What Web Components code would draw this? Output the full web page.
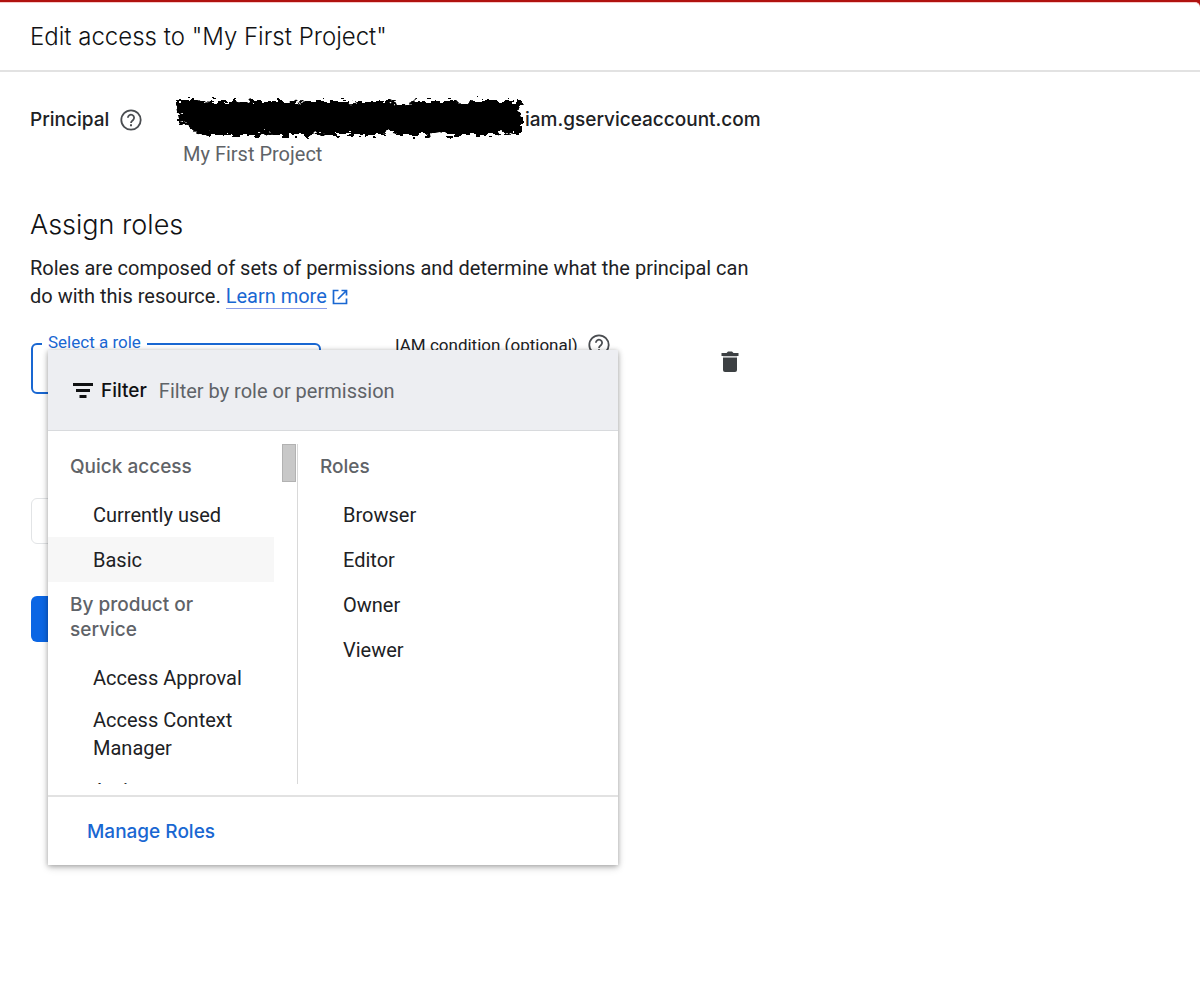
<!DOCTYPE html>
<html lang="en">
<head>
<meta charset="utf-8">
<meta name="viewport" content="width=device-width, initial-scale=1">
<title>Edit access</title>
<style>
  body {
    margin: 0;
    color: #202124;
    background: #fff;
    font: 400 20px/28px Roboto, "Liberation Sans", sans-serif;
    --display: Inter, "Open Sans", sans-serif;
    --blue: #1967d2;
    --muted: #5f6368;
    --line: #e2e2e2;
  }
</style>
</head>
<body>
<access-page></access-page>

<script>
const define = (name, html) => {
  const template = document.createElement('template');
  template.innerHTML = html;
  customElements.define(name, class extends HTMLElement {
    constructor() {
      super();
      this.attachShadow({ mode: 'open' }).append(template.content.cloneNode(true));
    }
  });
};

define('help-icon', `
<style>
  :host { display: inline-flex; width: 24px; height: 24px; color: #4a4d51; }
  button { display: flex; padding: 0; border: 0; background: none; color: inherit; }
</style>
<button type="button" aria-label="Help">
  <svg width="24" height="24" viewBox="0 0 24 24" fill="none" stroke="currentColor" stroke-width="1.8" aria-hidden="true">
    <circle cx="12" cy="12" r="9.700"/>
    <path d="M8.900 9.800a3.100 3.100 0 1 1 5 2.400c-1.200.9-1.900 1.400-1.900 2.900"/>
    <path d="M12 16.200v2" stroke-width="2"/>
  </svg>
</button>`);

define('page-header', `
<style>
  :host { display: block; padding: 17px 30px 16px; border-bottom: 2px solid var(--line); }
  h1 { margin: 0; font: 300 24px/34px var(--display); color: #111214; }
</style>
<h1><slot></slot></h1>`);

define('redacted-text', `
<style>
  :host { display: block; width: 348px; height: 44px; }
  svg { display: block; overflow: visible; }
</style>
<svg width="348" height="44" viewBox="0 2 348 44" aria-hidden="true">
  <filter id="rough" x="-5%" y="-20%" width="110%" height="140%">
    <feTurbulence type="fractalNoise" baseFrequency="0.14 0.3" numOctaves="2" seed="7"/>
    <feDisplacementMap in="SourceGraphic" scale="13" xChannelSelector="R" yChannelSelector="G"/>
  </filter>
  <path filter="url(#rough)" d="M1 4H22L24 7 34 5H62L66 8 78 5H110L116 8 130 5H174L178 8 184 5H214L222 9 240 5H280L286 9 296 5H346L343 18 346 24V39H334L326 36 318 39H270L262 37 252 39H222L214 34 208 39H150L142 37 130 39H98L90 37 80 39H34L22 38 12 29 5 27 2 17Z"/>
</svg>`);

define('principal-row', `
<style>
  :host { display: grid; grid-template-columns: 146px 1fr; align-items: start; }
  .label, .account { display: flex; align-items: center; height: 44px; font: 500 19px/28px var(--display); }
  .label { gap: 10px; }
  .account { gap: 1px; }
  .project { padding-left: 7px; line-height: 24px; color: var(--muted); }
</style>
<div class="label"><span>Principal</span><help-icon></help-icon></div>
<div>
  <div class="account"><redacted-text></redacted-text><slot></slot></div>
  <div class="project"><slot name="project"></slot></div>
</div>`);

define('roles-intro', `
<style>
  :host { display: block; max-width: 730px; }
  h2 { margin: 0 0 12px; font: 300 27px/34px var(--display); color: #111214; }
  p { margin: 0; }
  a { color: var(--blue); text-decoration: none; border-bottom: 1px solid #8c9eea; }
  svg { margin-left: 4px; vertical-align: -3px; color: var(--blue); }
</style>
<h2>Assign roles</h2>
<p>Roles are composed of sets of permissions and determine what the principal can <wbr>do with this resource. <a href="#learn">Learn more</a><svg width="18" height="18" viewBox="0 0 18 18" fill="none" stroke="currentColor" stroke-width="1.7" aria-hidden="true"><path d="M7.500 2.500H2.500v13h13v-5M10.500 2.500h5v5M15.500 2.500 7 11"/></svg></p>`);

define('role-item', `
<style>
  :host { display: block; }
  button {
    display: flex; align-items: center; box-sizing: border-box; width: 100%; min-height: 45px;
    padding: 6px 20px 6px 45px; border: 0; background: none;
    color: #202124; font: inherit; text-align: left;
  }
  :host([selected]) button { background: #f7f7f7; }
</style>
<button type="button"><slot></slot></button>`);

define('role-heading', `
<style>
  :host { display: block; padding: 10px 22px 13px; color: var(--muted); font: 500 19px/25px var(--display); }
</style>
<slot></slot>`);

define('role-menu', `
<style>
  :host { display: block; background: #fff; box-shadow: 0 1px 5px rgba(0,0,0,.3), 0 3px 8px rgba(0,0,0,.14); }
  .filter {
    display: flex; align-items: center; box-sizing: border-box; height: 81px; padding: 2px 24px 0;
    background: #edeef2; border-bottom: 1px solid #d8dadd;
  }
  label { display: flex; align-items: center; gap: 7px; color: #101113; font: 500 19px/28px var(--display); }
  input {
    flex: 1; min-width: 0; margin: 0; padding: 0 0 0 12px; border: 0; outline: 0; background: none;
    color: inherit; font: inherit;
  }
  input::placeholder { color: var(--muted); opacity: 1; }
  .panes { display: grid; grid-template-columns: 250px 1fr; height: 340px; padding: 13px 0 11px; }
  .pane { overflow: hidden; }
  .groups { display: grid; grid-template-columns: 1fr 14px; column-gap: 8px; box-sizing: border-box; padding-right: 1px; border-right: 1px solid #d9d9d9; }
  .thumb { box-sizing: border-box; height: 38px; background: #c8c8c8; border: 1px solid #b2b2b2; }
  .foot { padding: 21px 39px 19px; border-top: 2px solid var(--line); }
  a { display: block; color: var(--blue); text-decoration: none; font: 500 19px/28px var(--display); }
</style>
<div class="filter">
  <label for="q">
    <svg width="22" height="20" viewBox="0 0 22 20" fill="currentColor" aria-hidden="true"><path d="M1 2h20v3H1zM4 8h14v3H4zM7.500 14h7v3h-7z"/></svg>
    Filter
  </label>
  <input id="q" type="text" placeholder="Filter by role or permission">
</div>
<div class="panes">
  <div class="pane groups">
    <div><slot name="groups"></slot></div>
    <div class="thumb"></div>
  </div>
  <div class="pane"><slot name="roles"></slot></div>
</div>
<div class="foot"><a href="#roles">Manage Roles</a></div>`);

define('role-select', `
<style>
  :host { display: block; font-size: 17px; }
  fieldset {
    box-sizing: border-box; height: 62px; margin: 0; padding: 0 0 0 9px; min-width: 0;
    border: 2px solid var(--blue); border-radius: 6px;
  }
  legend { padding: 0 6px 4px; color: var(--blue); line-height: 20px; }
  select { width: 100%; height: 30px; border: 0; outline: 0; background: none; appearance: none; font: inherit; }
</style>
<fieldset>
  <legend><label for="role">Select a role</label></legend>
  <select id="role"></select>
</fieldset>`);

define('role-row', `
<style>
  :host { display: grid; grid-template-columns: 290px 249px auto; column-gap: 74px; align-items: start; justify-content: start; position: relative; }
  .condition { display: flex; align-items: center; gap: 9px; height: 26px; font-size: 17px; }
  .delete { display: flex; margin-top: 18px; padding: 0; border: 0; background: none; color: #3c4043; }
  ::slotted(role-menu) { position: absolute; left: 17px; top: 18px; width: 570px; z-index: 1; }
</style>
<role-select></role-select>
<div class="condition"><span>IAM condition (optional)</span><help-icon></help-icon></div>
<button class="delete" type="button" aria-label="Delete role">
  <svg width="24" height="24" viewBox="0 0 24 24" fill="currentColor" aria-hidden="true"><path d="M5 7h14v13a2 2 0 0 1-2 2H7a2 2 0 0 1-2-2z"/><path d="M5 6.500h14v1.500H5z" fill="#a0a3a5"/><path d="M3.500 3h5l1.500-1.500h4L15.500 3h5v3h-17z"/></svg>
</button>
<slot></slot>`);

define('form-actions', `
<style>
  :host { display: flex; flex-direction: column; align-items: flex-start; gap: 52px; }
  button { box-sizing: border-box; height: 46px; border-radius: 6px; }
  .add { width: 190px; border: 1px solid #e2e4e6; background: #fff; }
  .save { width: 84px; border: 0; background: #0b66e4; }
</style>
<button class="add" type="button" aria-label="Add another role"></button>
<button class="save" type="submit" aria-label="Save"></button>`);

define('access-page', `
<style>
  :host { display: block; background: #b0120f; padding-top: 2px; }
  .sheet { background: #fff; border-top: 1px solid #f6c9c9; border-top-right-radius: 5px; min-height: calc(100vh - 3px); }
  main { padding: 26px 30px; }
  roles-intro { margin-top: 42px; }
  role-row { margin: 22px 0 0 1px; }
  form-actions { margin: 104px 0 0 1px; }
</style>
<div class="sheet">
  <page-header>Edit access to "My First Project"</page-header>
  <main>
    <principal-row>iam.gserviceaccount.com<span slot="project">My First Project</span></principal-row>
    <roles-intro></roles-intro>
    <role-row>
      <role-menu>
        <role-heading slot="groups">Quick access</role-heading>
        <role-item slot="groups">Currently used</role-item>
        <role-item slot="groups" selected>Basic</role-item>
        <role-heading slot="groups">By product or service</role-heading>
        <role-item slot="groups">Access Approval</role-item>
        <role-item slot="groups">Access Context Manager</role-item>
        <role-item slot="groups">Actions</role-item>
        <role-heading slot="roles">Roles</role-heading>
        <role-item slot="roles">Browser</role-item>
        <role-item slot="roles">Editor</role-item>
        <role-item slot="roles">Owner</role-item>
        <role-item slot="roles">Viewer</role-item>
      </role-menu>
    </role-row>
    <form-actions></form-actions>
  </main>
</div>`);
</script>
</body>
</html>
